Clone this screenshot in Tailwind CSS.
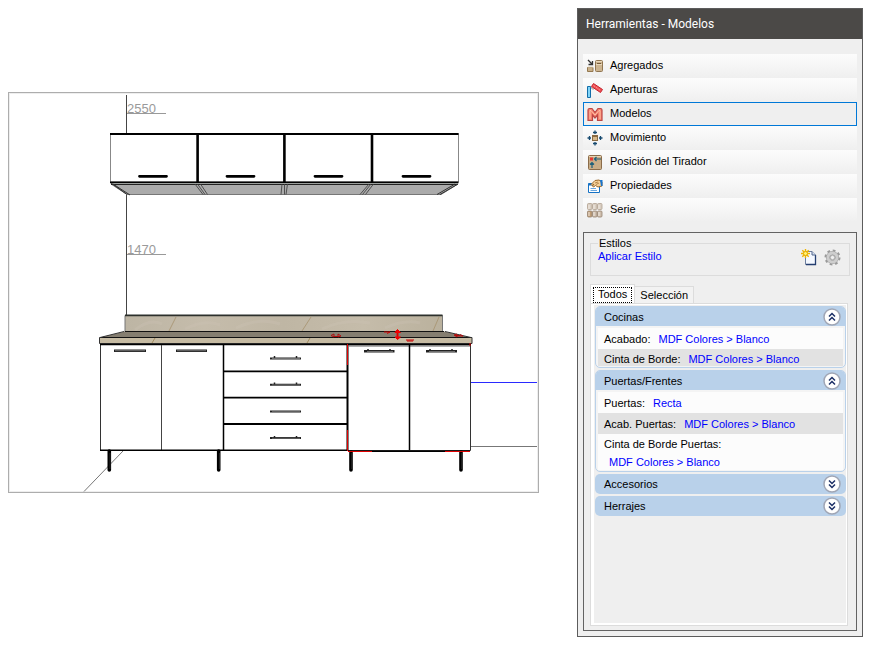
<!DOCTYPE html>
<html lang="es">
<head>
  <meta charset="UTF-8" />
  <meta name="viewport" content="width=device-width, initial-scale=1.0" />
  <title>Herramientas - Modelos</title>
  <script src="https://cdn.jsdelivr.net/npm/@tailwindcss/browser@4"></script>
</head>
<body class="bg-white p-2 flex items-start gap-[38px] text-[11px] leading-4 text-black font-['Liberation_Sans',Arial,sans-serif]">

  <!-- Kitchen view -->
  <main class="flex-1 min-w-0 mt-[84px] border border-[#adadad]">
    <svg viewBox="9 93 529 399" class="block w-full h-auto" role="img" aria-label="Vista frontal de la cocina">
      <defs>
        <linearGradient id="stone" x1="0" x2="1">
          <stop offset="0" stop-color="#bdb5a4" />
          <stop offset=".25" stop-color="#c5bcab" />
          <stop offset=".5" stop-color="#bfb6a4" />
          <stop offset=".75" stop-color="#c5bcaa" />
          <stop offset="1" stop-color="#bab19d" />
        </linearGradient>
      </defs>
      <rect x="9.5" y="93.5" width="528" height="398" fill="none" stroke="#eeeeee" />

      <!-- Walls and floor -->
      <g fill="none" stroke="#444" stroke-width="1">
        <path d="M126.500 95V134M126.500 195V315" />
        <path d="M123 451L84 491.500" stroke="#777" />
        <path d="M471 446.500H537" stroke="#777" />
        <path d="M471 382.500H537" stroke="#2a2aff" />
        <path d="M127 113.500H166M127 254.500H166" stroke="#999" />
      </g>
      <g fill="#9a9a9a" font-size="13">
        <text x="127" y="113">2550</text>
        <text x="127" y="254">1470</text>
      </g>

      <!-- Wall cabinets -->
      <path d="M111 184H458L441 194.500H127Z" fill="#ababab" stroke="#777" />
      <path d="M110.500 133.500H458.500V182H110.500Z" fill="#fff" stroke="#888" />
      <path d="M111 183.500H458" stroke="#cfd4d1" stroke-width="2" />
      <path d="M110 134H458.500M110 182.300H458.500" stroke="#000" stroke-width="1.800" />
      <path d="M111 184.500H458" stroke="#222" />
      <path d="M197.600 134V182M284.400 134V182M372 134V182" stroke="#000" stroke-width="2.600" />
      <path d="M111 183L127 194.500M113 184L130 195M458 184L440 194.500M455 184L437 194.500" stroke="#333" />
      <path d="M195 184L203 194.500M197.500 184L205 194.500M200.500 184L207.500 194.500M282 184L281 194.500M284.500 184V194.500M287.500 184L286 194.500M369 184L360 194.500M371 184L362.500 194.500M373.500 184L365.500 194.500" stroke="#444" stroke-width=".9" />
      <path d="M139.500 176.300H166.500M227 176.300H254M315 176.300H342M403 176.300H430" stroke="#000" stroke-width="2.800" stroke-linecap="round" />

      <!-- Worktop -->
      <path d="M125 315.500H442.500V332H125Z" fill="url(#stone)" stroke="#777" />
      <path d="M176 317L169 331M311 317L302 331M439 317L433 331" stroke="#a89470" opacity=".8" />
      <path d="M135 330Q150 318 162 324M185 329Q205 319 220 325M236 328Q260 317 280 324M322 329Q345 318 370 323M385 328Q405 319 420 323" fill="none" stroke="#cdc5b5" stroke-width="3" opacity=".3" />
      <path d="M125 331.500H444L471 337.500H100Z" fill="#857e70" />
      <path d="M99.500 337.500H472V343.500H99.500Z" fill="#c6bba3" stroke="#333" />
      <path d="M152 343L155 338M307 343L310 338" stroke="#a38c5f" />
      <path d="M125 315.300H442.500" stroke="#2d302c" stroke-width="1.800" />
      <path d="M125 331.500H444M100 337.500H471" stroke="#111" />
      <path d="M124 331.500L100 337.500M445 331.500L471 337.500" stroke="#333" />

      <!-- Base cabinets -->
      <path d="M100.500 344.500H470.500V450.500H100.500Z" fill="#fff" stroke="#333" />
      <path d="M100 344.500H471" stroke="#000" stroke-width="1.500" />
      <path d="M349 346H470" stroke="#333" stroke-width=".8" />
      <path d="M161.500 345V450" stroke="#444" />
      <path d="M100 450.300H348M348 451.200H470" stroke="#000" stroke-width="1.600" />
      <path d="M223.500 345V450M409.500 345V450" stroke="#000" stroke-width="1.500" />
      <path d="M347.500 344V451" stroke="#000" stroke-width="2" />
      <path d="M223 371.300H347M223 397.700H347M223 424H347" stroke="#000" stroke-width="1.800" />

      <g stroke="#222" stroke-width="2.600">
        <path d="M114 350.700H146M176 350.700H207" />
        <path d="M364 351.300H394.500M426 351.300H457" />
        <path d="M270 358.400H301M270 384.700H301M270 411.500H301M270 438H301" stroke-width="2" />
      </g>
      <path d="M115 350.700H145M177 350.700H206M367 351.500H393M429 351.500H455M272 358.500H300M272 384.900H300M272 411.700H300M272 438.200H300" stroke="#777" stroke-width=".9" />
      <path d="M274.500 356V358M296.500 356V358M274.500 382.500V384.500M296.500 382.500V384.500M274.500 436V438M296.500 436V438M368 349V351M390 349V351M430 349V351M452 349V351" stroke="#222" stroke-width="1.500" />

      <path d="M109.300 451V470M218.700 451V470M351 452V470M461 452V470" stroke="#000" stroke-width="3.600" stroke-linecap="round" />
      <path d="M110 453V469M219.400 453V469M351.800 453V469M461.800 453V469" stroke="#333" stroke-width=".8" />

      <!-- Selection marks -->
      <g fill="none" stroke="#e00000">
        <path d="M347.500 344V365M347.500 430V451M348 451.500H372M445 451.500H470M470 343V346" />
        <path d="M397.500 330V339" stroke-width="2" />
        <path d="M395 332.500L397.500 329.500L400.500 332.500ZM395 337L397.500 339.500L400.500 337Z" fill="#f00000" stroke="#f00000" />
        <path d="M384 332H390L387 333.500M406 340H414M407 341H413" stroke="#c00" />
        <path d="M331 335.500L334 334V337ZM333 336.500H340M341 336L338 334V337ZM454 335L457 334V337ZM456 336H463L460 334.500M455 335.500H460" stroke="#b01010" />
      </g>
    </svg>
  </main>

  <!-- Tools panel -->
  <aside class="w-[286px] shrink-0 border border-[#5c5c5c] bg-[#efefef]">
    <h1 class="h-[30px] px-2 flex items-center bg-[#4b4947] text-white text-[12px] font-[Roboto,'Open_Sans',sans-serif]">Herramientas - Modelos</h1>

    <nav class="mt-[15px] mx-[5px] flex flex-col">
      <button class="h-6 pl-1 flex items-center gap-[7px] bg-linear-to-b from-[#fcfcfc] to-[#efefef]">
        <svg class="size-4" viewBox="0 0 16 16">
          <path d="M1 2L5 6M5.500 3V6.500H1.500" fill="none" stroke="#333" stroke-width="1.300" />
          <path d="M0.500 9.500H6V13.500H0.500Z" fill="#c9b08a" stroke="#94784f" />
          <path d="M1 9H6" stroke="#e7d8be" />
          <rect x="8.500" y="2.500" width="7" height="11" rx="1" fill="#cdb591" stroke="#907652" />
          <path d="M9 6.500H15M9 3.500H15" stroke="#ead9bc" /><path d="M10 5.500H14" stroke="#70583a" />
        </svg>
        <span class="pb-[2px]">Agregados</span>
      </button>
      <button class="h-6 pl-1 flex items-center gap-[7px] bg-linear-to-b from-[#fcfcfc] to-[#efefef]">
        <svg class="size-4" viewBox="0 0 16 16">
          <path d="M0.500 4.500H3.500V15.500H0.500Z" fill="#80d4f8" stroke="#126da8" />
          <path d="M4 5Q5 8 7 7" fill="none" stroke="#999" />
          <path d="M6.500 1.500L15.500 7.500L13.500 10.500L4.500 4.500Z" fill="#ef5053" stroke="#c52530" />
          <path d="M6.500 3.500L13.500 8.500" stroke="#ff9292" stroke-dasharray="2 1" />
        </svg>
        <span class="pb-[2px]">Aperturas</span>
      </button>
      <button class="h-6 pl-[3px] flex items-center gap-[7px] border border-[#0078d7] bg-[#efefef]" aria-current="true">
        <svg class="size-4" viewBox="0 0 16 16">
          <path d="M1 14.500V4Q1 2.500 2.500 2.500H5L8 6.500L11 2.500H13.500Q15 2.500 15 4V14.500H10.500V9L8 12L5.500 9V14.500Z" fill="#f58471" stroke="#bd4644" stroke-width="1.200" />
          <path d="M3 13V4.500H4L8 9L12 4.500H13V13" fill="none" stroke="#ffc1a5" />
        </svg>
        <span class="pb-[2px]">Modelos</span>
      </button>
      <button class="h-6 pl-1 flex items-center gap-[7px] bg-linear-to-b from-[#fcfcfc] to-[#efefef]">
        <svg class="size-4" viewBox="0 0 16 16">
          <path d="M8 0.500V4M6 2.500H10M8 12V15.500M6 13.500H10M0.500 8H4M2.500 6V10M12 8H15.500M13.500 6V10" stroke="#174a70" stroke-width="1.300" />
          <rect x="5.500" y="5.500" width="5" height="5" fill="#d7b98c" stroke="#8a6b43" />
          <path d="M5 6.500H11" stroke="#8a6b43" />
        </svg>
        <span class="pb-[2px]">Movimiento</span>
      </button>
      <button class="h-6 pl-1 flex items-center gap-[7px] bg-linear-to-b from-[#fcfcfc] to-[#efefef]">
        <svg class="size-4" viewBox="0 0 16 16">
          <rect x="1.500" y="1.500" width="13" height="14" rx="1" fill="#c9ad87" stroke="#8b6c4a" />
          <path d="M2 2.500H14" stroke="#e8d5b5" />
          <rect x="3" y="3.500" width="3" height="3" fill="#e53935" />
          <path d="M7 5H14M9.500 3L7.500 5L9.500 7M5 14V8.500M3 10.500L5 8.500L7 10.500" fill="none" stroke="#1e607b" stroke-width="1.200" />
        </svg>
        <span class="pb-[2px]">Posición del Tirador</span>
      </button>
      <button class="h-6 pl-1 flex items-center gap-[7px] bg-linear-to-b from-[#fcfcfc] to-[#efefef]">
        <svg class="size-4" viewBox="0 0 16 16">
          <path d="M1.500 5.500H12.500V14.500H1.500Z" fill="#fff" stroke="#1672c5" />
          <path d="M1.500 6.500H7" stroke="#1672c5" stroke-width="2" />
          <path d="M3.500 10.500H9M3.500 12.500H10" stroke="#69a7df" />
          <path d="M4 6.500L8 2.500L12 2L15 4V8L11 9L8.500 7.500L6.500 9L5.500 8L7 6L5 7.500Z" fill="#f6d19a" stroke="#9b6a2c" />
          <path d="M13 2H15.500V8H14" fill="#1774cf" />
          <path d="M8 5L11 4M9 6.500L12 5" stroke="#9b6a2c" stroke-width=".7" />
        </svg>
        <span class="pb-[2px]">Propiedades</span>
      </button>
      <button class="h-6 pl-1 flex items-center gap-[7px] bg-linear-to-b from-[#fcfcfc] to-[#efefef]">
        <svg class="size-4" viewBox="0 0 16 16">
          <g fill="#d9cec2" stroke="#b0a190" stroke-width=".8">
            <rect x=".5" y="1.500" width="4.500" height="6" rx="1" /><rect x="5.500" y="1.500" width="4.500" height="6" rx="1" /><rect x="10.500" y="1.500" width="4.500" height="6" rx="1" />
          </g>
          <g fill="#cfbfae" stroke="#958371" stroke-width=".8">
            <rect x=".5" y="9" width="4.500" height="6" rx="1" fill="#c09d76" /><rect x="5.500" y="9" width="4.500" height="6" rx="1" /><rect x="10.500" y="9" width="4.500" height="6" rx="1" />
          </g>
          <path d="M2 3V7M7 3V7M12 3V7M2 10V14M7 10V14M12 10V14" stroke="#f2ebe4" />
        </svg>
        <span class="pb-[2px]">Serie</span>
      </button>
    </nav>

    <section class="mt-[10px] mx-[5px] mb-[5px] px-[6px] pt-1 pb-1 border border-[#636363]">
      <fieldset class="h-[39px] pl-[7px] pr-2 border border-[#dcdcdc]">
        <legend class="px-px h-3 leading-3">Estilos</legend>
        <div class="flex items-start">
          <a href="#" class="leading-[14px] text-[#0000ff]">Aplicar Estilo</a>
          <div class="ml-auto flex gap-[6px]">
            <button aria-label="Nuevo estilo">
              <svg class="size-[17px]" viewBox="0 0 17 17">
                <path d="M4.500 2.500H11L14.500 6V15.500H4.500Z" fill="#f4f8ff" stroke="#6c7e9e" />
                <path d="M14.500 6V15.500H5" fill="none" stroke="#243e70" stroke-width="1.300" />
                <path d="M11 2.500V6H14.500" fill="#d5e0f0" stroke="#52678c" />
                <path d="M4.500 0V9M0 4.500H9M1.300 1.300L7.700 7.700M7.700 1.300L1.300 7.700" stroke="#f0b400" stroke-width="1.400" />
                <circle cx="4.500" cy="4.500" r="2" fill="#fff275" stroke="#e7ae00" />
              </svg>
            </button>
            <button aria-label="Configurar estilos">
              <svg class="size-[17px]" viewBox="0 0 17 17">
                <circle cx="8.500" cy="8.500" r="7" fill="none" stroke="#999" stroke-width="2" stroke-dasharray="2.750 2.748" />
                <circle cx="8.500" cy="8.500" r="4.500" fill="none" stroke="#a0a0a0" stroke-width="4" />
                <circle cx="8.500" cy="8.500" r="4.500" fill="none" stroke="#cecece" stroke-width="2.800" />
                <circle cx="8.500" cy="8.500" r="2.200" fill="#efefef" stroke="#999" stroke-width=".8" />
              </svg>
            </button>
          </div>
        </div>
      </fieldset>

      <div class="mt-2 flex items-end" role="tablist">
        <button role="tab" aria-selected="true" class="h-[19px] pt-px px-[2px] border border-b-0 border-[#dcdcdc] bg-white">
          <span class="block h-4 px-1 leading-3 border border-dotted border-black">Todos</span>
        </button>
        <button role="tab" aria-selected="false" class="h-[17px] px-[5px] border border-l-0 border-b-0 border-[#dcdcdc] bg-[#f2f2f2]">Selección</button>
      </div>

      <div role="tabpanel" class="mr-[2px] min-h-[323px] border border-[#dcdcdc] bg-white pl-[3px] pr-px pt-px pb-[2px] flex flex-col">
        <div class="flex-1 bg-[#efefef] pl-px pt-px flex flex-col gap-[2px]">

          <section class="rounded-[5px] border border-[#b9d1ea] bg-[#f4f4f4]">
            <button class="w-full h-[19px] pl-2 pr-1 flex items-center justify-between bg-[#b9d1ea] rounded-t" aria-expanded="true">
              <span>Cocinas</span>
              <svg class="size-[18px]" viewBox="0 0 18 18"><circle cx="9" cy="9" r="8" fill="#fff" stroke="#a0a6b5" stroke-width="1.500" /><path d="M6 8.500L9 5.500L12 8.500M6 12.500L9 9.500L12 12.500" fill="none" stroke="#1c2f66" stroke-width="1.500" /></svg>
            </button>
            <div class="px-[2px] pt-[2px] pb-px">
              <div class="h-[21px] pl-[6px] flex items-center gap-2 bg-[#fcfcfc]"><span>Acabado:</span><a href="#" class="text-[#0000ff]">MDF Colores &gt; Blanco</a></div>
              <div class="h-[17px] pl-[6px] pt-[2px] flex items-center gap-2 bg-[#e2e2e2]"><span>Cinta de Borde:</span><a href="#" class="text-[#0000ff]">MDF Colores &gt; Blanco</a></div>
            </div>
          </section>

          <section class="rounded-[5px] border border-[#b9d1ea] bg-[#f4f4f4]">
            <button class="w-full h-[19px] pl-2 pr-1 flex items-center justify-between bg-[#b9d1ea] rounded-t" aria-expanded="true">
              <span>Puertas/Frentes</span>
              <svg class="size-[18px]" viewBox="0 0 18 18"><circle cx="9" cy="9" r="8" fill="#fff" stroke="#a0a6b5" stroke-width="1.500" /><path d="M6 8.500L9 5.500L12 8.500M6 12.500L9 9.500L12 12.500" fill="none" stroke="#1c2f66" stroke-width="1.500" /></svg>
            </button>
            <div class="px-[2px] pt-[2px] pb-px">
              <div class="h-[21px] pl-[6px] flex items-center gap-2 bg-[#fcfcfc]"><span>Puertas:</span><a href="#" class="text-[#0000ff]">Recta</a></div>
              <div class="h-[21px] pl-[6px] flex items-center gap-2 bg-[#e2e2e2]"><span>Acab. Puertas:</span><a href="#" class="text-[#0000ff]">MDF Colores &gt; Blanco</a></div>
              <div class="h-[36px] pl-[6px] pt-[2px] flex flex-col items-start gap-[2px] bg-[#fcfcfc]"><span>Cinta de Borde Puertas:</span><a href="#" class="ml-[5px] text-[#0000ff]">MDF Colores &gt; Blanco</a></div>
            </div>
          </section>

          <button class="h-5 pl-[9px] pr-[5px] flex items-center justify-between bg-[#b9d1ea] rounded-[5px]" aria-expanded="false">
            <span>Accesorios</span>
            <svg class="size-[18px]" viewBox="0 0 18 18"><circle cx="9" cy="9" r="8" fill="#fff" stroke="#a0a6b5" stroke-width="1.500" /><path d="M6 5.500L9 8.500L12 5.500M6 9.500L9 12.500L12 9.500" fill="none" stroke="#1c2f66" stroke-width="1.500" /></svg>
          </button>
          <button class="h-5 pl-[9px] pr-[5px] flex items-center justify-between bg-[#b9d1ea] rounded-[5px]" aria-expanded="false">
            <span>Herrajes</span>
            <svg class="size-[18px]" viewBox="0 0 18 18"><circle cx="9" cy="9" r="8" fill="#fff" stroke="#a0a6b5" stroke-width="1.500" /><path d="M6 5.500L9 8.500L12 5.500M6 9.500L9 12.500L12 9.500" fill="none" stroke="#1c2f66" stroke-width="1.500" /></svg>
          </button>

        </div>
      </div>
    </section>
  </aside>

</body>
</html>
